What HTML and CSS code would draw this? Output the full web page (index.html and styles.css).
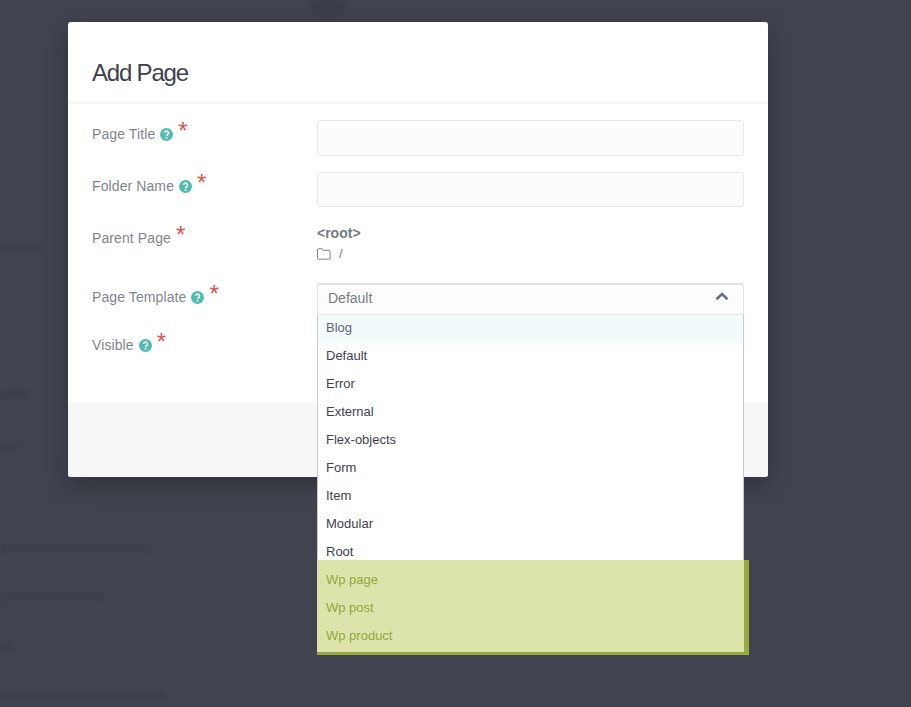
FILE: index.html
```html
<!DOCTYPE html>
<html lang="en">
<head>
<meta charset="utf-8">
<title>Add Page</title>
<link rel="stylesheet" href="styles.css">
</head>
<body>
<div class="backdrop" aria-hidden="true">
  <span class="ghost g1"></span><span class="ghost g3"></span>
  <span class="ghost g4"></span><span class="ghost g5"></span><span class="ghost g6"></span>
  <span class="ghost g7"></span><span class="ghost g8"></span><span class="ghost g9"></span>
</div>
<main class="modal">
  <header class="modal-head"><h1>Add Page</h1></header>
  <form class="modal-form">
    <div class="row row-title">
      <label class="label">Page Title <svg class="help" viewBox="0 0 12 12"><circle cx="6" cy="6" r="6"/><path d="M4.2 4.7a1.8 1.8 0 1 1 2.9 1.4c-.7.5-1.1.8-1.1 1.4"/><circle class="dot" cx="6" cy="9.3" r=".9"/></svg><span class="req">*</span></label>
      <input class="input" type="text">
    </div>
    <div class="row row-folder">
      <label class="label">Folder Name <svg class="help" viewBox="0 0 12 12"><circle cx="6" cy="6" r="6"/><path d="M4.2 4.7a1.8 1.8 0 1 1 2.9 1.4c-.7.5-1.1.8-1.1 1.4"/><circle class="dot" cx="6" cy="9.3" r=".9"/></svg><span class="req">*</span></label>
      <input class="input" type="text">
    </div>
    <div class="row row-parent">
      <label class="label">Parent Page<span class="req req-plain">*</span></label>
      <div class="parent">
        <strong>&lt;root&gt;</strong>
        <div class="path">
          <svg class="folder" viewBox="0 0 14 12"><path d="M1.5.7h3.4l1.3 1.6h5.9a1 1 0 0 1 1 1v6.9a1 1 0 0 1-1 1H1.500a1 1 0 0 1-1-1V1.700a1 1 0 0 1 1-1z"/></svg>
          <span>/</span>
        </div>
      </div>
    </div>
    <div class="row row-template">
      <label class="label">Page Template <svg class="help" viewBox="0 0 12 12"><circle cx="6" cy="6" r="6"/><path d="M4.2 4.7a1.8 1.8 0 1 1 2.9 1.4c-.7.5-1.1.8-1.1 1.4"/><circle class="dot" cx="6" cy="9.3" r=".9"/></svg><span class="req">*</span></label>
      <div class="select">
        <div class="select-value">
          <span>Default</span>
          <svg class="chev" viewBox="0 0 14 9"><path d="M1.500 7.300 7 2l5.500 5.300"/></svg>
        </div>
        <ul class="options">
          <li class="active">Blog</li>
          <li>Default</li>
          <li>Error</li>
          <li>External</li>
          <li>Flex-objects</li>
          <li>Form</li>
          <li>Item</li>
          <li>Modular</li>
          <li>Root</li>
          <li class="wp first">Wp page</li>
          <li class="wp">Wp post</li>
          <li class="wp last">Wp product</li>
        </ul>
      </div>
    </div>
    <div class="row row-visible">
      <label class="label">Visible <svg class="help" viewBox="0 0 12 12"><circle cx="6" cy="6" r="6"/><path d="M4.2 4.7a1.8 1.8 0 1 1 2.9 1.4c-.7.5-1.1.8-1.1 1.4"/><circle class="dot" cx="6" cy="9.3" r=".9"/></svg><span class="req">*</span></label>
    </div>
  </form>
  <footer class="modal-foot"></footer>
</main>
</body>
</html>
```
FILE: styles.css
```css
* { box-sizing: border-box; }
html, body { height: 100%; }
body {
  margin: 0;
  height: 707px;
  overflow: hidden;
  padding: 22px 0 0 68px;
  background: #41434f;
  font-family: "Liberation Sans", Arial, sans-serif;
  color: #737c81;
}

/* faint, blurred content of the dimmed page behind the modal */
.backdrop { position: absolute; inset: 0; overflow: hidden; }
.ghost {
  position: absolute;
  height: 5px;
  background: rgba(40, 42, 52, .16);
  filter: blur(2px);
}
.g1 { left: 0; top: 546px; width: 148px; }
.g3 { left: 5px; top: 594px; width: 98px; }
.g4 { left: 0; top: 645px; width: 12px; }
.g5 { left: 0; top: 693px; width: 165px; }
.g6 { left: 0; top: 447px; width: 16px; }
.g7 { left: 0; top: 392px; width: 30px; }
.g8 { left: 0; top: 245px; width: 40px; }
.g9 { left: 312px; top: 0; width: 32px; height: 20px; border-radius: 0 0 16px 16px; }

.modal {
  position: relative;
  width: 700px;
  height: 455px;
  display: flex;
  flex-direction: column;
  background: #fff;
  border-radius: 3px;
  box-shadow: 0 8px 24px rgba(0, 0, 0, .28);
}
.modal-head {
  height: 82px;
  padding: 37px 24px 0;
  border-bottom: 3px solid #f7f7f7;
}
.modal-head h1 {
  margin: 0;
  font-size: 24px;
  line-height: 28px;
  font-weight: 400;
  letter-spacing: -1.2px;
  color: #3d424e;
}
.modal-form {
  flex: 1;
  padding: 16px 24px 0;
}
.row {
  display: grid;
  grid-template-columns: 225px 427px;
}
.row-title { height: 52px; }
.row-folder { height: 52px; }
.row-parent { height: 59px; }
.row-template { height: 48px; }

.label {
  font-size: 14px;
  line-height: 20px;
  padding-top: 4px;
  letter-spacing: .1px;
  white-space: nowrap;
  color: #80858d;
}
.help {
  display: inline-block;
  width: 13px;
  height: 13px;
  vertical-align: -2px;
  margin-left: 1px;
}
.help > circle:first-child { fill: #4fbcb0; }
.help path { fill: none; stroke: #fff; stroke-width: 1.5; }
.help .dot { fill: #fff; }
.req {
  display: inline-block;
  margin-left: 5px;
  font-size: 24px;
  line-height: 14px;
  vertical-align: 0;
  color: #d9534f;
}
.input {
  display: block;
  width: 427px;
  height: 36px;
  background: #fcfcfc;
  border: 1px solid #e9e9e9;
  border-radius: 3px;
  outline: 0;
}
.row-folder .input { height: 35px; }
.parent strong {
  display: block;
  font-size: 14px;
  line-height: 18px;
  font-weight: 700;
  color: #737c81;
}
.path {
  display: flex;
  align-items: center;
  gap: 8px;
  margin-top: 2px;
  font-size: 13px;
  line-height: 20px;
  color: #737c81;
}
.folder { width: 14px; height: 12px; }
.folder path { fill: none; stroke: #7d828a; stroke-width: 1; }

.select { position: relative; height: 32px; }
.select-value {
  height: 32px;
  display: flex;
  align-items: center;
  justify-content: space-between;
  padding: 0 14px 3px 10px;
  font-size: 14px;
  color: #737c81;
  background: #fdfdfd;
  border: 1px solid #e4e4e4;
  border-top: 2px solid #e0e0e0;
  border-radius: 3px 3px 0 0;
}
.chev { width: 14px; height: 9px; margin-top: -3px; }
.chev path { fill: none; stroke: #6a6f7c; stroke-width: 2.600; }
.options {
  position: absolute;
  left: 0;
  top: 32px;
  width: 427px;
  margin: 0;
  padding: 0;
  list-style: none;
  background: #fff;
  border-left: 1px solid #c9c9c9;
  border-right: 1px solid #c9c9c9;
  font-size: 13px;
}
.options li {
  height: 28px;
  line-height: 25px;
  padding-left: 8px;
  color: #3d424e;
}
.options li.active { background: #f2fafc; color: #5f6671; }
.options li.wp {
  position: relative;
  background: #dce4ab;
  color: #94a63b;
  margin: 0 -6px 0 -1px;
  padding-left: 9px;
  border-right: 5px solid #98aa3e;
}
.options li.wp.first { height: 35px; margin-top: -7px; padding-top: 7px; }
.options li.wp.last { height: 32px; border-bottom: 3px solid #98aa3e; }

.modal-foot {
  height: 75px;
  background: #f7f7f7;
  border-radius: 0 0 3px 3px;
}
```
